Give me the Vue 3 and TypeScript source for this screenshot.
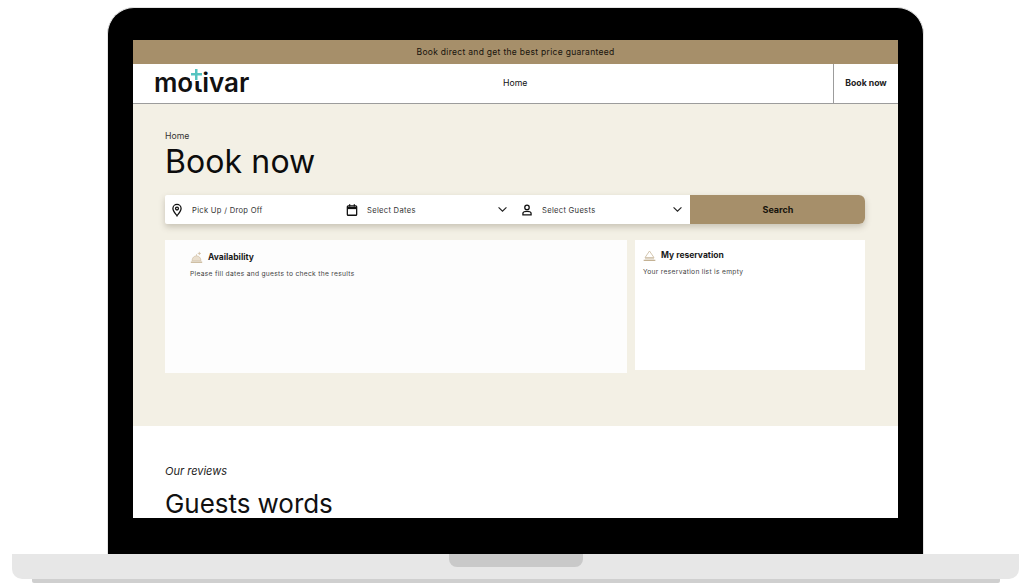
<script setup lang="ts">
interface Field { label: string; icon: string; chevron: boolean }
const fields: Field[] = [
  { label: 'Pick Up / Drop Off', icon: 'pin', chevron: false },
  { label: 'Select Dates', icon: 'calendar', chevron: true },
  { label: 'Select Guests', icon: 'person', chevron: true },
]
</script>

<template>
  <div class="stage">
    <div class="lid">
      <div class="screen">
        <div class="promo">Book direct and get the best price guaranteed</div>
        <header class="nav">
          <div class="logo"><span class="word">motivar</span><i class="plus"></i></div>
          <a class="nav-link">Home</a>
          <a class="nav-cta">Book now</a>
        </header>
        <section class="hero">
          <div class="crumb">Home</div>
          <h1>Book now</h1>
          <div class="search">
            <div v-for="f in fields" :key="f.label" class="field">
              <svg class="ico" viewBox="0 0 24 24" fill="none" stroke="#111" stroke-width="2.200">
                <template v-if="f.icon === 'pin'">
                  <path d="M12 22c-1-2-7-7.500-7-12.500a7 7 0 0 1 14 0C19 14.500 13 20 12 22z" />
                  <circle cx="12" cy="9.500" r="2.500" />
                </template>
                <template v-else-if="f.icon === 'calendar'">
                  <rect x="4" y="5" width="16" height="16" rx="1.500" />
                  <path d="M4 8.500h16" stroke-width="4" />
                  <path d="M8 2v4M16 2v4" />
                </template>
                <template v-else>
                  <circle cx="12" cy="7.500" r="3.800" />
                  <path d="M5 20.500v-2.500c0-2 3.500-3.500 7-3.500s7 1.500 7 3.500v2.500z" />
                </template>
              </svg>
              <span class="field-label">{{ f.label }}</span>
              <svg v-if="f.chevron" class="chev" viewBox="0 0 12 8" fill="none" stroke="#222" stroke-width="1.300">
                <path d="M1.500 1.500 6 6l4.500-4.500" />
              </svg>
            </div>
            <button class="search-btn">Search</button>
          </div>
          <div class="cards">
            <div class="card card-main">
              <div class="card-head">
                <svg class="bell" viewBox="0 0 16 16">
                  <path d="M2.500 12a5.500 6 0 0 1 11 0z" fill="#eadfce" stroke="#cdbb9f" stroke-width=".8" />
                  <path d="M1 13.800h14" stroke="#cdbb9f" stroke-width="1.800" />
                  <path d="M8 6V4M11.500 1v4M9.500 3h4" stroke="#cdbb9f" stroke-width=".9" fill="none" />
                </svg>
                <strong>Availability</strong>
              </div>
              <p>Please fill dates and guests to check the results</p>
            </div>
            <div class="card card-side">
              <div class="card-head">
                <svg class="bell" viewBox="0 0 16 16" fill="none" stroke="#c4b294" stroke-width=".9">
                  <path d="M2.500 10.500 8 2.500l5.500 8z" />
                  <path d="M.8 14h14.400" stroke-width="1.600" />
                  <path d="M2.500 12h11" />
                </svg>
                <strong>My reservation</strong>
              </div>
              <p>Your reservation list is empty</p>
            </div>
          </div>
        </section>
        <section class="reviews">
          <em>Our reviews</em>
          <h2>Guests words</h2>
        </section>
      </div>
    </div>
    <div class="base">
      <div class="notch"></div>
    </div>
    <div class="base-shadow"></div>
  </div>
</template>

<style>
html, body { margin: 0; background: #fff; }
</style>

<style scoped>
.stage {
  width: 1024px;
  height: 587px;
  padding-top: 7px;
  box-sizing: border-box;
  overflow: hidden;
  display: flex;
  flex-direction: column;
  align-items: center;
  font-family: Inter, "Liberation Sans", sans-serif;
  color: #111;
}
.lid {
  width: 817px;
  height: 547px;
  margin-left: 7px;
  box-sizing: border-box;
  padding: 32px 25px 36px 25px;
  background: #000;
  border: 1.500px solid #e4e4e4;
  border-bottom: 0;
  border-radius: 27px 27px 0 0;
  flex: none;
}
.screen {
  height: 100%;
  background: #fff;
  overflow: hidden;
  display: flex;
  flex-direction: column;
}
.promo {
  height: 24px;
  flex: none;
  background: #a68f6a;
  font-size: 8.500px;
  letter-spacing: .3px;
  line-height: 24px;
  text-align: center;
  color: #17130c;
}
.nav {
  height: 40px;
  flex: none;
  box-sizing: border-box;
  border-bottom: 1px solid #9c9c9c;
  display: flex;
  align-items: center;
  position: relative;
  padding-left: 21px;
}
.logo {
  position: relative;
  width: 96px;
  height: 39px;
  line-height: 37px;
}
.word {
  font-family: Inter, sans-serif;
  font-weight: 600;
  font-size: 26px;
  letter-spacing: -.05px;
  color: #111;
}
.plus {
  position: absolute;
  left: 36px;
  top: 3px;
  width: 12px;
  height: 14px;
  background:
    linear-gradient(#55c4c0, #55c4c0) center / 2.500px 11px no-repeat,
    linear-gradient(#55c4c0, #55c4c0) center / 11px 2.500px no-repeat,
    #fff;
}
.nav-link {
  position: absolute;
  left: 370px;
  font-size: 8.700px;
  line-height: 39px;
}
.nav-cta {
  margin-left: auto;
  width: 64px;
  height: 39px;
  border-left: 1px solid #9c9c9c;
  text-align: center;
  font-size: 8.700px;
  font-weight: 700;
  line-height: 39px;
  color: #222;
}
.hero {
  height: 322px;
  flex: none;
  box-sizing: border-box;
  padding: 27px 33px 0 32px;
  background: #f3f0e5;
}
.crumb {
  font-size: 8.700px;
  line-height: 11px;
  color: #333;
}
h1 {
  margin: 0;
  font-size: 32px;
  font-weight: 400;
  line-height: 40px;
  letter-spacing: .1px;
  color: #0c0c0c;
}
.search {
  margin-top: 13px;
  height: 29px;
  display: flex;
  background: #fff;
  border-radius: 2px 6px 6px 2px;
  box-shadow: 0 3px 6px rgba(70, 60, 40, .25);
}
.field {
  width: 175px;
  flex: none;
  box-sizing: border-box;
  padding: 0 7px 0 5px;
  display: flex;
  align-items: center;
}
.ico {
  width: 14px;
  height: 14px;
  flex: none;
}
.field-label {
  margin-left: 8px;
  padding-top: 1px;
  font-size: 7.600px;
  letter-spacing: .3px;
  color: #333;
}
.chev {
  width: 11px;
  height: 7px;
  margin-left: auto;
}
.search-btn {
  flex: 1;
  border: 0;
  padding: 0 0 0 1px;
  background: #a68f6a;
  border-radius: 0 6px 6px 0;
  font-family: inherit;
  font-size: 9px;
  font-weight: 700;
  color: #17130c;
}
.cards {
  margin-top: 16px;
  display: flex;
  align-items: flex-start;
  gap: 8px;
}
.card {
  background: #fdfdfd;
  box-sizing: border-box;
}
.card-main {
  width: 462px;
  height: 133px;
  padding: 9px 25px;
}
.card-side {
  width: 230px;
  height: 130px;
  padding: 7px 8px;
  background: #fff;
}
.card-head {
  display: flex;
  align-items: center;
  gap: 5px;
  height: 16px;
}
.bell {
  width: 13px;
  height: 13px;
  flex: none;
}
.card-head strong {
  font-size: 8.500px;
  font-weight: 700;
  color: #1a1a1a;
}
.card p {
  margin: 4px 0 0;
  font-size: 6.700px;
  line-height: 10px;
  letter-spacing: .29px;
  color: #444;
}
.reviews {
  padding: 38px 32px 0;
}
.reviews em {
  display: block;
  font-size: 11px;
  line-height: 14px;
  color: #222;
}
h2 {
  margin: 12px 0 0;
  font-size: 26px;
  font-weight: 400;
  line-height: 28px;
  letter-spacing: -.05px;
  color: #111;
}
.base {
  width: 1007px;
  height: 25px;
  margin-left: 6px;
  flex: none;
  background: #e7e7e7;
  border-radius: 0 0 10px 10px;
  display: flex;
  justify-content: center;
}
.notch {
  width: 134px;
  height: 13px;
  margin-left: 1px;
  background: #c9c9c9;
  border-radius: 0 0 8px 8px;
}
.base-shadow {
  width: 968px;
  height: 4px;
  margin-left: 8px;
  flex: none;
  background: #cfcfcf;
  border-radius: 0 0 2px 2px;
}
</style>
